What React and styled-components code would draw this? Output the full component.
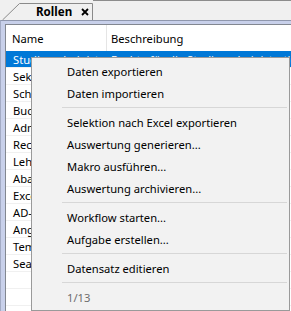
import React from "react";
import styled, { createGlobalStyle } from "styled-components";

const rows = [
  { name: "Studienadministration", desc: "Rechte für die Studienadministration" },
  { name: "Sekretariat", desc: "Sekretariat" },
  { name: "Schulleitung", desc: "Schulleitung" },
  { name: "Buchhaltung", desc: "Buchhaltung" },
  { name: "Administrator", desc: "Systemadministration" },
  { name: "Rechnungswesen", desc: "Rechnungswesen" },
  { name: "Lehrperson", desc: "Lehrpersonen" },
  { name: "Abacus", desc: "Schnittstelle Abacus" },
  { name: "Excel", desc: "Excel Export" },
  { name: "AD-Sync", desc: "Active Directory" },
  { name: "Angestellte", desc: "Angestellte" },
  { name: "Template", desc: "Vorlagen" },
  { name: "Search", desc: "Suche" },
  { name: "", desc: "" },
  { name: "", desc: "" },
  { name: "", desc: "" },
];

const menu = [
  { label: "Daten exportieren" },
  { label: "Daten importieren" },
  { sep: true },
  { label: "Selektion nach Excel exportieren" },
  { label: "Auswertung generieren..." },
  { label: "Makro ausführen..." },
  { label: "Auswertung archivieren..." },
  { sep: true },
  { label: "Workflow starten..." },
  { label: "Aufgabe erstellen..." },
  { sep: true },
  { label: "Datensatz editieren" },
  { sep: true },
  { label: "1/13", disabled: true },
];

const GlobalStyle = createGlobalStyle`
  html, body { margin: 0; padding: 0; background: #f0f0f0; }
  body {
    font-family: "Noto Sans", "Open Sans", sans-serif;
    font-size: 11.2px;
    color: #000;
  }
`;

const App = () => {
  return (
    <>
      <GlobalStyle />
      <Window>
        <TabStrip>
          <Tab>
            <TabOutline width="93" height="19" viewBox="0 0 93 19">
              <path d="M2.5 19 L19.5 2.5 L92.5 2.5 L92.5 19" fill="#f0f0f0" stroke="#8a8a8a" strokeWidth="1" />
            </TabOutline>
            <TabLabel>Rollen</TabLabel>
            <CloseIcon width="8" height="8" viewBox="0 0 8 8">
              <path d="M1 1 L7 7 M7 1 L1 7" stroke="#000" strokeWidth="1.8" />
            </CloseIcon>
          </Tab>
          <TabFiller />
        </TabStrip>

        <Frame>
          <Table>
            <HeaderRow>
              <NameCell $header>Name</NameCell>
              <DescCell $header>Beschreibung</DescCell>
            </HeaderRow>
            {rows.map((r, i) => (
              <Row key={i} $selected={i === 0}>
                <NameCell>{r.name}</NameCell>
                <DescCell>{r.desc}</DescCell>
              </Row>
            ))}
          </Table>
        </Frame>

        <Menu>
          {menu.map((m, i) =>
            m.sep ? (
              <Separator key={i} />
            ) : (
              <MenuItem key={i} $disabled={m.disabled}>
                {m.label}
              </MenuItem>
            )
          )}
        </Menu>
      </Window>
    </>
  );
};

const Window = styled.div`
  position: relative;
  width: 291px;
  height: 311px;
  overflow: hidden;
  display: flex;
  flex-direction: column;
  background: #f0f0f0;
`;

const TabStrip = styled.div`
  height: 20px;
  display: flex;
  flex-shrink: 0;
`;

const Tab = styled.div`
  position: relative;
  width: 93px;
  height: 20px;
  display: flex;
  align-items: center;
`;

const TabOutline = styled.svg`
  position: absolute;
  left: 0;
  top: 1px;
`;

const TabLabel = styled.span`
  position: relative;
  margin-left: 36px;
  margin-top: 2px;
  font-weight: bold;
  font-size: 11.6px;
`;

const CloseIcon = styled.svg`
  position: relative;
  margin-left: 9px;
  margin-top: 3px;
`;

const TabFiller = styled.div`
  flex: 1;
  border-top: 1px solid #8c8c8c;
`;

const Frame = styled.div`
  flex: 1;
  display: flex;
  background: #c8d0ea;
  border-top: 1px solid #8f97ad;
  border-left: 1px solid #a3abc4;
  padding: 3px 0 0 4px;
  min-height: 0;
`;

const Table = styled.div`
  flex: 1;
  background: #fff;
  border-top: 1px solid #828790;
  border-left: 1px solid #828790;
  overflow: hidden;
`;

const HeaderRow = styled.div`
  display: flex;
  height: 26px;
  align-items: stretch;
`;

const Row = styled.div`
  display: flex;
  height: 16px;
  border-bottom: 1px solid #f0f0f0;
  background: ${(p) => (p.$selected ? "#0078d7" : "#fff")};
  color: ${(p) => (p.$selected ? "#fff" : "#000")};
`;

const NameCell = styled.div`
  width: 101px;
  flex-shrink: 0;
  display: flex;
  align-items: center;
  padding-left: ${(p) => (p.$header ? "6px" : "7px")};
  padding-top: ${(p) => (p.$header ? "1px" : "0")};
  box-sizing: border-box;
  border-right: 1px solid ${(p) => (p.$header ? "#e5e5e5" : "transparent")};
  white-space: nowrap;
  overflow: hidden;
`;

const DescCell = styled.div`
  flex: 1;
  display: flex;
  align-items: center;
  padding-left: 4px;
  padding-top: ${(p) => (p.$header ? "1px" : "0")};
  white-space: nowrap;
  overflow: hidden;
`;

const Menu = styled.div`
  position: absolute;
  left: 31px;
  top: 57px;
  width: 259px;
  height: 254px;
  box-sizing: border-box;
  background: #f2f2f2;
  border: 1px solid #9a9a9a;
  padding: 2px 0;
  display: flex;
  flex-direction: column;
`;

const MenuItem = styled.div`
  height: 22px;
  flex-shrink: 0;
  display: flex;
  align-items: center;
  padding-left: 35px;
  color: ${(p) => (p.$disabled ? "#6d6d6d" : "#000")};
  white-space: nowrap;
`;

const Separator = styled.div`
  height: 7px;
  flex-shrink: 0;
  display: flex;
  align-items: center;
  margin: 0 2px 0 30px;

  &::after {
    content: "";
    flex: 1;
    height: 1px;
    background: #d7d7d7;
  }
`;

export default App;
